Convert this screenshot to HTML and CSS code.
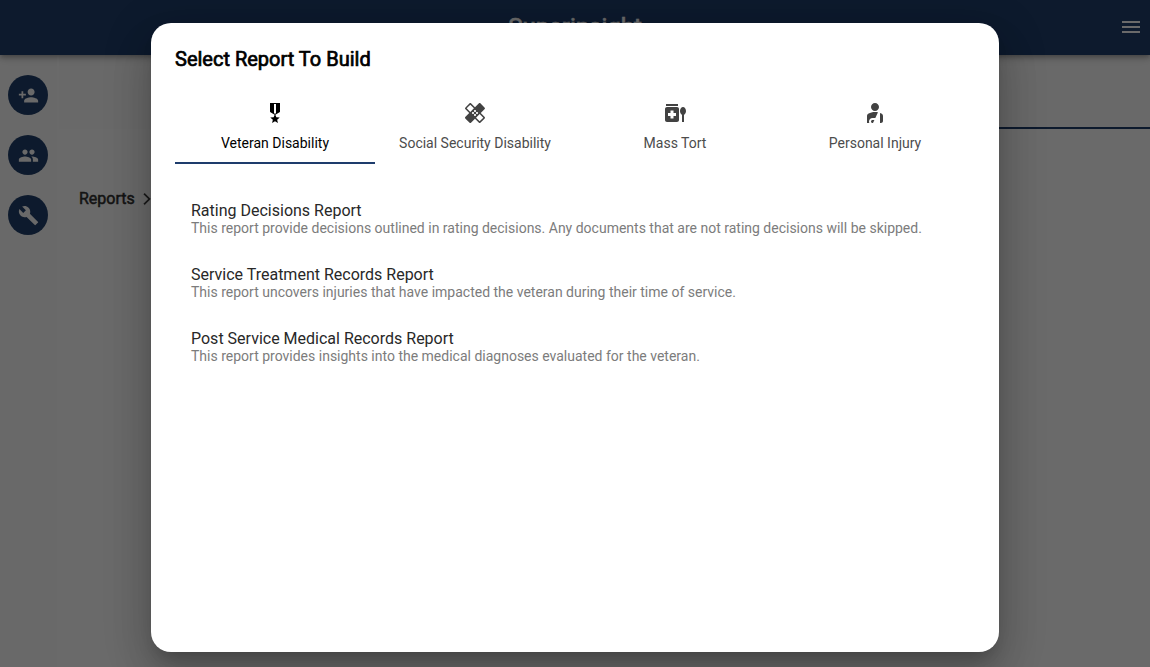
FILE: index.html
```html
<!DOCTYPE html>
<html lang="en">
<head>
<meta charset="utf-8">
<title>Superinsight</title>
<link rel="stylesheet" href="styles.css">
</head>
<body>
<div class="app">
  <header class="appbar">
    <span class="brand">Superinsight</span>
    <svg class="menu" viewBox="0 0 24 24"><path d="M3 18h18v-2H3v2zm0-5h18v-2H3v2zm0-7v2h18V6H3z"/></svg>
  </header>
  <div class="body">
    <nav class="rail">
      <a class="round"><svg viewBox="0 0 24 24"><path d="M15 12c2.21 0 4-1.79 4-4s-1.79-4-4-4-4 1.790-4 4 1.790 4 4 4zm-9-2V7H4v3H1v2h3v3h2v-3h3v-2H6zm9 4c-2.670 0-8 1.340-8 4v2h16v-2c0-2.660-5.330-4-8-4z"/></svg></a>
      <a class="round"><svg viewBox="0 0 24 24"><path d="M16 11c1.660 0 2.990-1.340 2.990-3S17.660 5 16 5s-3 1.340-3 3 1.340 3 3 3zm-8 0c1.660 0 2.990-1.340 2.990-3S9.660 5 8 5 5 6.340 5 8s1.340 3 3 3zm0 2c-2.330 0-7 1.170-7 3.500V19h14v-2.500c0-2.330-4.670-3.500-7-3.500zm8 0c-.29 0-.62.02-.97.05 1.160.84 1.970 1.970 1.970 3.450V19h6v-2.500c0-2.330-4.670-3.500-7-3.500z"/></svg></a>
      <a class="round"><svg viewBox="0 0 24 24"><path d="M22.700 19l-9.100-9.100c.9-2.300.4-5-1.500-6.900-2-2-5-2.400-7.400-1.300L9 6 6 9 1.600 4.700C.4 7.100.9 10.100 2.900 12.100c1.900 1.900 4.600 2.400 6.900 1.500l9.100 9.100c.4.4 1 .4 1.400 0l2.300-2.300c.5-.4.5-1.100.1-1.400z"/></svg></a>
    </nav>
    <main class="main">
      <div class="band"></div>
      <div class="crumbs">
        <span>Reports</span>
        <svg viewBox="0 0 24 24"><path d="M6.230 20.230L8 22l10-10L8 2 6.230 3.770 14.460 12z"/></svg>
      </div>
    </main>
  </div>
</div>

<div class="scrim">
  <section class="dialog">
    <h1 class="title">Select Report To Build</h1>
    <div class="tabs">
      <div class="tab active">
        <svg viewBox="0 0 24 24"><path d="M17 10.430V2H7v8.430c0 .35.18.68.49.86l4.180 2.510-.99 2.340-3.410.29 2.590 2.240L9.070 22 12 20.230 14.930 22l-.78-3.330 2.590-2.240-3.410-.29-.99-2.340 4.180-2.510c.3-.18.48-.5.48-.86zm-4 1.800l-1 .6-1-.6V3h2v9.230z"/></svg>
        <span>Veteran Disability</span>
      </div>
      <div class="tab">
        <svg viewBox="0 0 24 24"><path d="M17.730 12.020l3.980-3.980c.39-.39.39-1.020 0-1.410l-4.340-4.340c-.39-.39-1.020-.39-1.410 0l-3.980 3.980L8 2.290C7.800 2.100 7.550 2 7.290 2c-.25 0-.51.1-.7.29L2.250 6.630c-.39.39-.39 1.020 0 1.410l3.980 3.980L2.250 16c-.39.39-.39 1.020 0 1.410l4.340 4.340c.39.39 1.020.39 1.410 0l3.980-3.980 3.980 3.980c.2.2.45.29.71.29.26 0 .51-.1.71-.29l4.340-4.340c.39-.39.39-1.020 0-1.410l-3.990-3.980zM12 9c.55 0 1 .45 1 1s-.45 1-1 1-1-.45-1-1 .45-1 1-1zm-4.710 1.960L3.660 7.340l3.630-3.630 3.620 3.620-3.620 3.630zM10 13c-.55 0-1-.45-1-1s.45-1 1-1 1 .45 1 1-.45 1-1 1zm2 2c-.55 0-1-.45-1-1s.45-1 1-1 1 .45 1 1-.45 1-1 1zm2-4c.55 0 1 .45 1 1s-.45 1-1 1-1-.45-1-1 .45-1 1-1zm2.660 9.340l-3.630-3.620 3.630-3.630 3.620 3.620-3.620 3.630z"/></svg>
        <span>Social Security Disability</span>
      </div>
      <div class="tab">
        <svg viewBox="0 0 24 24"><path fill-rule="evenodd" d="M3 3h12v2H3zM14 6H4c-1.100 0-2 .9-2 2v11c0 1.100.9 2 2 2h10c1.100 0 2-.9 2-2V8c0-1.100-.9-2-2-2zm-1 9h-2.500v2.500h-3V15H5v-3h2.500V9.500h3V12H13zM20 6c-1.680 0-3 1.760-3 4 0 1.770.83 3.220 2 3.760V21h2v-7.240c1.170-.54 2-1.990 2-3.760 0-2.240-1.320-4-3-4z"/></svg>
        <span>Mass Tort</span>
      </div>
      <div class="tab">
        <svg viewBox="0 0 24 24"><path d="M8 6c0-2.210 1.790-4 4-4s4 1.790 4 4-1.790 4-4 4-4-1.790-4-4zM17 22h1c1.100 0 2-.9 2-2v-4.780c0-1.120-.61-2.150-1.610-2.660-.43-.22-.9-.43-1.390-.62zM12.340 17L15 11.330C14.070 11.120 13.070 11 12 11c-2.530 0-4.710.7-6.390 1.560C4.610 13.070 4 14.100 4 15.220V22h2.340C6.120 21.550 6 21.040 6 20.500 6 18.570 7.570 17 9.500 17zM10 22l1.410-3H9.500c-.83 0-1.500.67-1.500 1.500S8.670 22 9.500 22z"/></svg>
        <span>Personal Injury</span>
      </div>
    </div>
    <ul class="reports">
      <li><h2>Rating Decisions Report</h2><p>This report provide decisions outlined in rating decisions. Any documents that are not rating decisions will be skipped.</p></li>
      <li><h2>Service Treatment Records Report</h2><p>This report uncovers injuries that have impacted the veteran during their time of service.</p></li>
      <li><h2>Post Service Medical Records Report</h2><p>This report provides insights into the medical diagnoses evaluated for the veteran.</p></li>
    </ul>
  </section>
</div>
</body>
</html>
```

FILE: styles.css
```css
* { box-sizing: border-box; margin: 0; padding: 0; }
body { width: 1150px; height: 667px; overflow: hidden; font-family: Roboto, sans-serif; }
svg { display: block; fill: currentColor; }

.app { height: 667px; display: flex; flex-direction: column; background: #e8e8e8; }
.appbar {
  position: relative; z-index: 1;
  height: 55px; flex: none;
  display: grid; grid-template-columns: 1fr auto 1fr; align-items: center;
  background: #1e3a62; color: #e6e6e6;
  box-shadow: 0 2px 4px -1px rgba(0,0,0,.2), 0 4px 5px rgba(0,0,0,.14), 0 1px 10px rgba(0,0,0,.12);
}
.brand { grid-column: 2; padding-bottom: 2px; font-size: 24px; font-weight: 400; line-height: 28px; -webkit-text-stroke: .7px currentColor; }
.menu { grid-column: 3; justify-self: end; width: 24px; height: 24px; margin: 0 7px 1px 0; }

.body { flex: 1; display: flex; }
.rail { width: 57px; flex: none; display: flex; flex-direction: column; gap: 20px; padding: 20px 8px; background: #e4e4e4; }
.round { width: 40px; height: 40px; border-radius: 50%; background: #1e3a62; color: #e4e4e4; display: grid; place-items: center; }
.round svg { width: 21px; height: 21px; }
.main { flex: 1; padding-left: 2px; }
.band { height: 74px; background: #e4e4e4; border-bottom: 2px solid #1e3a62; border-image: linear-gradient(90deg, #e4e4e4 0 40%, #1e3a62 40%) 1; }
.crumbs { display: flex; align-items: center; gap: 5px; padding: 58px 0 0 20px; font-size: 16px; font-weight: 400; line-height: 24px; color: #2c2c2c; -webkit-text-stroke: .5px currentColor; }
.crumbs svg { width: 14px; height: 14px; stroke: currentColor; stroke-width: .5; }

.scrim { position: absolute; inset: 0; display: flex; justify-content: center; align-items: flex-start; padding-top: 23px; background: rgba(0,0,0,.54); z-index: 2; overflow: hidden; }
.dialog {
  width: 848px; height: 629px; padding: 24px; border-radius: 20px; background: #fff;
  box-shadow: 0 11px 15px -7px rgba(0,0,0,.2), 0 24px 38px 3px rgba(0,0,0,.14), 0 9px 46px 8px rgba(0,0,0,.12);
}
.title { font-size: 20px; line-height: 24px; font-weight: 400; color: #000; -webkit-text-stroke: .7px currentColor; }
.tabs { display: grid; grid-template-columns: repeat(4, 1fr); height: 72px; margin-top: 21px; }
.tab { display: flex; flex-direction: column; align-items: center; padding-top: 9px; gap: 10px; font-size: 14px; line-height: 16px; color: #4c4c4c; }
.tab svg { width: 24px; height: 24px; color: #424242; }
.tab.active { color: #000; border-bottom: 2px solid #1e3c6c; }
.tab.active svg { color: #000; }
.reports { list-style: none; display: flex; flex-direction: column; gap: 28px; padding: 37px 16px 0; }
.reports h2 { font-size: 16px; line-height: 19px; font-weight: 400; color: #282828; }
.reports p { font-size: 14px; line-height: 17px; color: #7c7c7c; white-space: nowrap; }
```
